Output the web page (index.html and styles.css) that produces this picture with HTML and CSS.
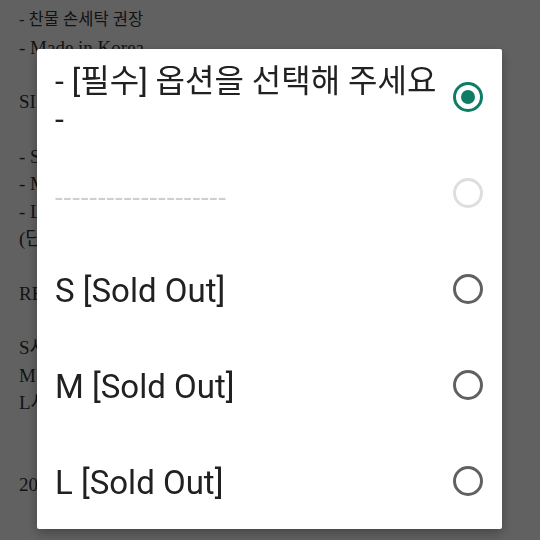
FILE: index.html
```html
<!DOCTYPE html>
<html lang="ko">
<head>
  <meta charset="UTF-8" />
  <meta name="viewport" content="width=device-width, initial-scale=1.0"/>
  <title>옵션 선택</title>
  <link rel="stylesheet" href="styles.css">
</head>
<body>
  <div class="page">
    <p class="line ko">- 겉감 폴리에스터 100%</p>
    <p class="line ko">- 찬물 손세탁 권장</p>
    <p class="line">- Made in Korea</p>
    <p class="line">&nbsp;</p>
    <p class="line">SIZE (cm)</p>
    <p class="line">&nbsp;</p>
    <p class="line">- S 어깨 44 가슴 52 총장 68</p>
    <p class="line">- M 어깨 46 가슴 55 총장 70</p>
    <p class="line">- L 어깨 48 가슴 58 총장 72</p>
    <p class="line">(단면 기준, 측정 방법에 따라 오차 있음)</p>
    <p class="line">&nbsp;</p>
    <p class="line">REFERENCE</p>
    <p class="line">&nbsp;</p>
    <p class="line">S사이즈 175cm 63kg</p>
    <p class="line">M사이즈 180cm 70kg</p>
    <p class="line">L사이즈 183cm 78kg</p>
    <p class="line">&nbsp;</p>
    <p class="line">&nbsp;</p>
    <p class="line">2024 F/W</p>
  </div>

  <!-- option picker -->
  <div class="overlay">
    <div class="dialog">
      <div class="option">
        <div class="label label-title">- [필수] 옵션을 선택해 주세요<br>-</div>
        <span class="radio checked"></span>
      </div>
      <div class="option">
        <div class="label label-divider">--------------------</div>
        <span class="radio disabled"></span>
      </div>
      <div class="option">
        <div class="label">S [Sold Out]</div>
        <span class="radio"></span>
      </div>
      <div class="option">
        <div class="label">M [Sold Out]</div>
        <span class="radio"></span>
      </div>
      <div class="option">
        <div class="label">L [Sold Out]</div>
        <span class="radio"></span>
      </div>
    </div>
  </div>
</body>
</html>
```

FILE: styles.css
```css
body {
  margin: 0;
  padding: 0;
  background: #fff;
  overflow: hidden;
}

.page {
  margin-top: -21px;
  padding-left: 19px;
  font-family: "Liberation Serif", "Noto Sans CJK KR", serif;
  font-size: 19px;
  color: #333;
}

.line {
  margin: 0;
  line-height: 27.35px;
  white-space: nowrap;
}

.line.ko {
  font-size: 16.5px;
}

.overlay {
  position: fixed;
  top: 0;
  left: 0;
  width: 100%;
  height: 100%;
  background: rgba(0, 0, 0, 0.62);
  display: flex;
  align-items: flex-start;
  padding: 49px 0 0 37px;
  box-sizing: border-box;
}

.dialog {
  width: 465px;
  background: #fff;
  border-radius: 2px;
  box-shadow: 0 4px 12px rgba(0, 0, 0, 0.3);
  display: flex;
  flex-direction: column;
}

.option {
  height: 96px;
  display: flex;
  align-items: center;
  justify-content: space-between;
  padding: 0 19px 0 18px;
}

.label {
  font-family: Roboto, "Noto Sans CJK KR", sans-serif;
  font-size: 33px;
  color: #212121;
  line-height: 38px;
  white-space: nowrap;
  padding-top: 3px;
}

.label-title {
  font-size: 32px;
  padding-top: 6px;
}

.label-divider {
  color: #cfcfcf;
  font-size: 28px;
  letter-spacing: 0.85px;
  padding-top: 10px;
}

.radio {
  width: 24px;
  height: 24px;
  border: 3px solid #616161;
  border-radius: 50%;
  display: flex;
  align-items: center;
  justify-content: center;
  flex-shrink: 0;
}

.radio.disabled {
  border-color: #dedede;
}

.radio.checked {
  border-color: #0f7d66;
}

.radio.checked::after {
  content: "";
  width: 14px;
  height: 14px;
  border-radius: 50%;
  background: #0f7d66;
}
```
